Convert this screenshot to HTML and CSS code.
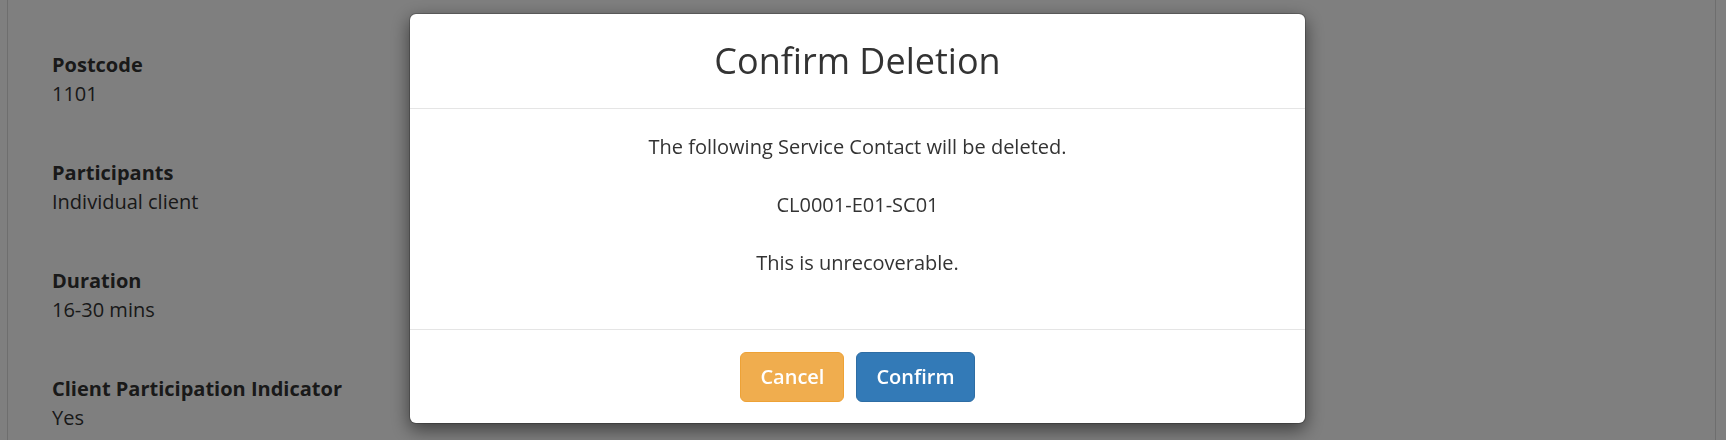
FILE: index.html
```html
<!DOCTYPE html>
<html lang="en">
<head>
<meta charset="utf-8">
<title>Confirm Deletion</title>
<link rel="stylesheet" href="styles.css">
</head>
<body>
<div class="panel">
  <dl class="details">
    <div class="item"><dt>Postcode</dt><dd>1101</dd></div>
    <div class="item"><dt>Participants</dt><dd>Individual client</dd></div>
    <div class="item"><dt>Duration</dt><dd>16-30 mins</dd></div>
    <div class="item"><dt>Client Participation Indicator</dt><dd>Yes</dd></div>
  </dl>
</div>
<div class="backdrop">
  <div class="modal">
    <div class="modal-header"><h4 class="modal-title">Confirm Deletion</h4></div>
    <div class="modal-body">
      <p>The following Service Contact will be deleted.</p>
      <p>CL0001-E01-SC01</p>
      <p>This is unrecoverable.</p>
    </div>
    <div class="modal-footer">
      <button class="btn btn-warning">Cancel</button>
      <button class="btn btn-primary">Confirm</button>
    </div>
  </div>
</div>
</body>
</html>
```
FILE: styles.css
```css
* { box-sizing: border-box; }
html, body { margin: 0; padding: 0; }
body {
  font-family: "Open Sans", "Noto Sans", sans-serif;
  font-size: 20px;
  line-height: 29px;
  color: #333;
  background: #fff;
  height: 440px;
  overflow: hidden;
}
.panel {
  margin: -20px 10px 0 7px;
  border-left: 1px solid #ddd;
  border-right: 1px solid #ddd;
  height: 460px;
  padding: 70px 44px 0;
  overflow: hidden;
}
.details { margin: 0; }
.item { margin-bottom: 50px; }
.item:last-child { margin-bottom: 0; }
.item dt { font-weight: 700; }
.item dd { margin: 0; }
.backdrop {
  position: fixed;
  inset: 0;
  background: rgba(0, 0, 0, 0.5);
  display: flex;
  justify-content: center;
  align-items: flex-start;
  padding-top: 13px;
  padding-right: 11px;
}
.modal {
  width: 897px;
  background: #fff;
  border: 1px solid rgba(0, 0, 0, 0.2);
  border-radius: 7px;
  box-shadow: 0 6px 18px rgba(0, 0, 0, 0.5);
  background-clip: padding-box;
}
.modal-header {
  padding: 27px 20px;
  border-bottom: 1px solid #e5e5e5;
  text-align: center;
}
.modal-title {
  margin: 0;
  font-size: 36px;
  font-weight: 400;
  line-height: 39.6px;
}
.modal-body {
  padding: 23px 23px 23px;
  text-align: center;
}
.modal-body p { margin: 0 0 29px; }
.modal-footer {
  border-top: 1px solid #e5e5e5;
  padding: 22px 20px 21px;
  display: flex;
  justify-content: center;
  gap: 12px;
}
.btn {
  font-family: "Open Sans", "Noto Sans", sans-serif;
  font-size: 20px;
  font-weight: 600;
  height: 50px;
  padding: 0 19px;
  border-radius: 6px;
  border: 1px solid transparent;
  color: #fff;
  line-height: 48px;
}
.btn-warning { background: #f0ad4e; border-color: #eea236; }
.btn-primary { background: #337ab7; border-color: #2e6da4; }
```
